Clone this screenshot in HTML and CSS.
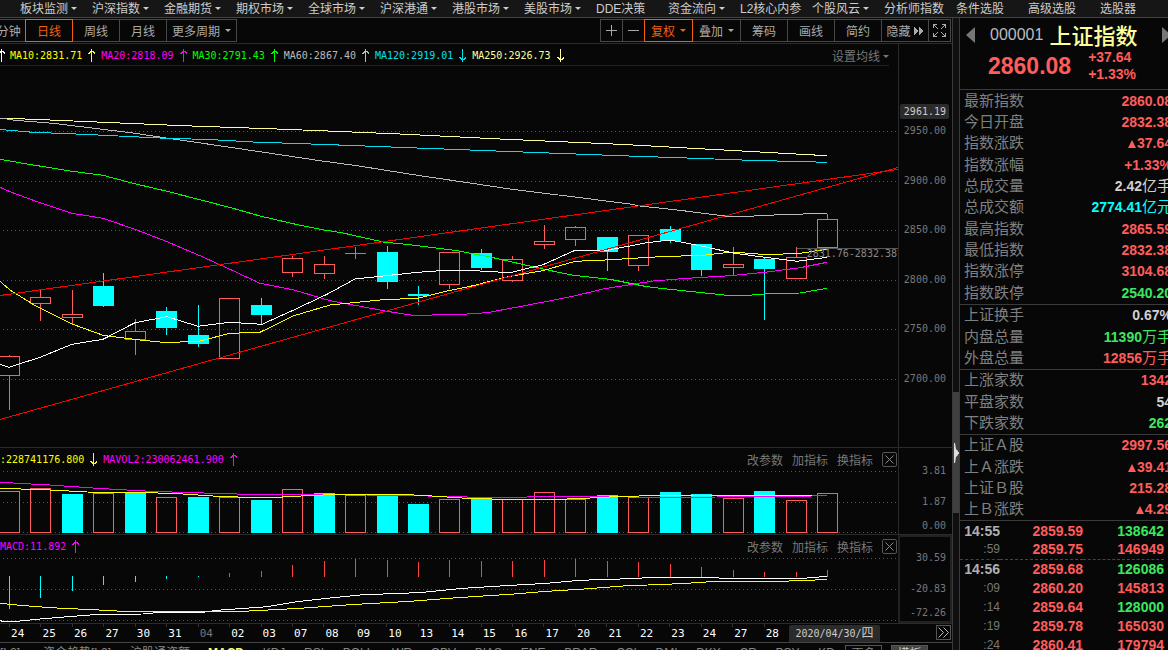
FILE: index.html
```html
<!DOCTYPE html>
<html lang="zh-CN">
<head>
<meta charset="utf-8">
<title>上证指数 000001</title>
<link rel="stylesheet" href="styles.css">
</head>
<body>
<div class="app">
  <nav class="nav">
    <button class="nav-item caret">板块监测</button>
    <button class="nav-item caret">沪深指数</button>
    <button class="nav-item caret">金融期货</button>
    <button class="nav-item caret">期权市场</button>
    <button class="nav-item caret">全球市场</button>
    <button class="nav-item caret">沪深港通</button>
    <button class="nav-item caret">港股市场</button>
    <button class="nav-item caret">美股市场</button>
    <button class="nav-item">DDE决策</button>
    <button class="nav-item caret">资金流向</button>
    <button class="nav-item">L2核心内参</button>
    <button class="nav-item caret">个股风云</button>
    <button class="nav-item">分析师指数</button>
    <button class="nav-item">条件选股</button>
    <button class="nav-item">高级选股</button>
    <button class="nav-item">选股器</button>
  </nav>

  <div class="body">
    <main class="work">
      <div class="toolbar">
        <div class="group periods">
          <button class="tool">60分钟</button>
          <button class="tool active">日线</button>
          <button class="tool">周线</button>
          <button class="tool">月线</button>
          <button class="tool wide caret">更多周期</button>
        </div>
        <div class="group">
          <button class="tool icon" aria-label="放大"><svg width="11" height="11"><path d="M5.5 0V11M0 5.5H11"/></svg></button>
          <button class="tool icon" aria-label="缩小"><svg width="11" height="11"><path d="M0 5.5H11"/></svg></button>
          <button class="tool menu active caret">复权</button>
          <button class="tool menu caret">叠加</button>
          <button class="tool">筹码</button>
          <button class="tool">画线</button>
          <button class="tool">简约</button>
          <button class="tool hide">隐藏<svg width="10" height="8"><path class="solid" d="M0 0L5 4L0 8ZM5 0L10 4L5 8Z"/></svg></button>
          <button class="tool icon" aria-label="全屏"><svg width="13" height="13"><path d="M.5 4V.5H4M9 .5H12.5V4M12.5 9V12.5H9M4 12.5H.5V9M1 1L5 5M12 1L8 5M12 12L8 8M1 12L5 8"/></svg></button>
        </div>
      </div>

      <section class="panel price">
        <div class="plot">
          <header class="head ma">
            <div class="legend">
              <svg class="arrow white lead"><use href="#up"/></svg>
              <span class="yellow">MA10:2831.71</span><svg class="arrow yellow"><use href="#up"/></svg>
              <span class="magenta">MA20:2818.09</span><svg class="arrow magenta"><use href="#up"/></svg>
              <span class="lime">MA30:2791.43</span><svg class="arrow lime"><use href="#up"/></svg>
              <span class="silver">MA60:2867.40</span><svg class="arrow silver"><use href="#up"/></svg>
              <span class="aqua">MA120:2919.01</span><svg class="arrow aqua"><use href="#down"/></svg>
              <span class="cream">MA250:2926.73</span><svg class="arrow cream"><use href="#down"/></svg>
            </div>
            <button class="set caret">设置均线</button>
          </header>
          <svg class="chart" id="price" viewBox="0 66 898 381" preserveAspectRatio="none" role="img" aria-label="日K线"></svg>
          <span class="gap-note">2831.76-2832.38</span>
        </div>
        <div class="axis">
          <span class="badge">2961.19</span>
          <div class="scale">
            <span>2950.00</span><span>2900.00</span><span>2850.00</span><span>2800.00</span><span>2750.00</span><span>2700.00</span>
          </div>
        </div>
      </section>

      <section class="panel volume">
        <div class="plot">
          <header class="head">
            <div class="legend">
              <span class="yellow">:228741176.800</span><svg class="arrow yellow"><use href="#down"/></svg>
              <span class="magenta">MAVOL2:230062461.900</span><svg class="arrow magenta"><use href="#up"/></svg>
            </div>
            <div class="actions">
              <button>改参数</button><button>加指标</button><button>换指标</button>
              <button class="close" aria-label="关闭"><svg width="9" height="9"><path d="M.5 .5L8.5 8.5M8.5 .5L.5 8.5"/></svg></button>
            </div>
          </header>
          <svg class="chart" id="volume" viewBox="0 470 898 64" preserveAspectRatio="none" role="img" aria-label="成交量"></svg>
        </div>
        <div class="axis"><div class="sub"><span>3.81</span><span>1.87</span><span>0.00</span></div></div>
      </section>

      <section class="panel macd">
        <div class="plot">
          <header class="head">
            <div class="legend">
              <span class="magenta">MACD:11.892</span><svg class="arrow magenta"><use href="#up"/></svg>
            </div>
            <div class="actions">
              <button>改参数</button><button>加指标</button><button>换指标</button>
              <button class="close" aria-label="关闭"><svg width="9" height="9"><path d="M.5 .5L8.5 8.5M8.5 .5L.5 8.5"/></svg></button>
            </div>
          </header>
          <svg class="chart" id="macd" viewBox="0 557 898 66" preserveAspectRatio="none" role="img" aria-label="MACD"></svg>
        </div>
        <div class="axis selected"><div class="sub"><span>30.59</span><span>-20.83</span><span>-72.26</span></div></div>
      </section>

      <div class="dates">
        <div class="days">
          <span>24</span><span>25</span><span>26</span><span>27</span><span>30</span><span>31</span><span class="month">04</span><span>02</span><span>03</span><span>07</span><span>08</span><span>09</span><span>10</span><span>13</span><span>14</span><span>15</span><span>16</span><span>17</span><span>20</span><span>21</span><span>22</span><span>23</span><span>24</span><span>27</span><span>28</span>
        </div>
        <span class="today">2020/04/30/<span class="weekday">四</span></span>
        <button class="more" aria-label="更多"><svg width="11" height="11"><path d="M.5 .5L5.5 5.5L.5 10.5M5.5 .5L10.5 5.5L5.5 10.5"/></svg></button>
      </div>

      <div class="tabs">
        <button class="cut">分时量[L2]</button>
        <button>资金趋势[L2]</button>
        <button>沪股通资额</button>
        <div class="indicators">
          <button class="on">MACD</button><button>KDJ</button><button>RSI</button><button>BOLL</button><button>WR</button><button>OBV</button><button>BIAS</button><button>ENE</button><button>BRAR</button><button>CCI</button><button>DMI</button><button>DKX</button><button>CR</button><button>PSY</button><button>KD</button>
        </div>
        <button class="boxed">更多</button>
        <button class="boxed filled">模板</button>
      </div>
    </main>

    <div class="splitter"><div class="thumb"><svg width="5" height="20"><path d="M0 0H1L2 6L4 8V9H5V11H4V12L2 14L1 20H0Z"/></svg></div></div>

    <aside class="quote">
      <header class="title">
        <button class="prev" aria-label="上一个"><svg width="9" height="16"><path d="M9 0V16L0 8Z"/></svg></button>
        <div class="name"><span class="code">000001</span><h1>上证指数</h1></div>
        <button class="next" aria-label="下一个"><svg width="9" height="16"><path d="M0 0V16L9 8Z"/></svg></button>
        <div class="last"><strong>2860.08</strong><div class="change"><span>+37.64</span><span>+1.33%</span></div></div>
      </header>

      <div class="facts">
        <dl class="ten">
          <div><dt>最新指数</dt><dd>2860.08</dd></div>
          <div><dt>今日开盘</dt><dd>2832.38</dd></div>
          <div><dt>指数涨跌</dt><dd class="delta">37.64</dd></div>
          <div><dt>指数涨幅</dt><dd>+1.33%</dd></div>
          <div><dt>总成交量</dt><dd class="flat">2.42<span>亿手</span></dd></div>
          <div><dt>总成交额</dt><dd class="money">2774.41<span>亿元</span></dd></div>
          <div><dt>最高指数</dt><dd>2865.59</dd></div>
          <div><dt>最低指数</dt><dd>2832.38</dd></div>
          <div><dt>指数涨停</dt><dd>3104.68</dd></div>
          <div><dt>指数跌停</dt><dd class="down">2540.20</dd></div>
        </dl>
        <dl class="three">
          <div><dt>上证换手</dt><dd class="flat">0.67%</dd></div>
          <div><dt>内盘总量</dt><dd class="down">11390<span>万手</span></dd></div>
          <div><dt>外盘总量</dt><dd>12856<span>万手</span></dd></div>
        </dl>
        <dl class="three">
          <div><dt>上涨家数</dt><dd>1342</dd></div>
          <div><dt>平盘家数</dt><dd class="flat">54</dd></div>
          <div><dt>下跌家数</dt><dd class="down">262</dd></div>
        </dl>
        <dl class="four">
          <div><dt>上证Ａ股</dt><dd>2997.56</dd></div>
          <div><dt>上Ａ涨跌</dt><dd class="delta">39.41</dd></div>
          <div><dt>上证Ｂ股</dt><dd>215.28</dd></div>
          <div><dt>上Ｂ涨跌</dt><dd class="delta">4.29</dd></div>
        </dl>
      </div>

      <table class="ticks">
        <tbody>
          <tr class="minute"><th>14:55</th><td>2859.59</td><td class="down">138642</td></tr>
          <tr><th>:59</th><td>2859.75</td><td>146949</td></tr>
          <tr class="minute split"><th>14:56</th><td>2859.68</td><td class="down">126086</td></tr>
          <tr><th>:09</th><td>2860.20</td><td>145813</td></tr>
          <tr><th>:14</th><td>2859.64</td><td class="down">128000</td></tr>
          <tr><th>:19</th><td>2859.78</td><td>165030</td></tr>
          <tr><th>:24</th><td>2860.41</td><td>179794</td></tr>
        </tbody>
      </table>
    </aside>
  </div>
</div>

<svg class="defs" aria-hidden="true">
  <symbol id="up" viewBox="0 0 7 13"><path d="M3.5 0V13M0 4.5H1V3.5H2V2.5H5V3.5H6V4.5H7"/></symbol>
  <symbol id="down" viewBox="0 0 7 13"><path d="M3.5 0V13M0 8.5H1V9.5H2V10.5H5V9.5H6V8.5H7"/></symbol>
</svg>
<script src="chart.js"></script>
</body>
</html>
```
FILE: styles.css
```css
* { box-sizing: border-box; }

body {
  margin: 0;
  background: #070707;
  color: #aaa;
  font: 12px "Liberation Sans", "Noto Sans CJK SC", sans-serif;
}

button {
  margin: 0;
  padding: 0;
  border: 0;
  background: none;
  color: inherit;
  font: inherit;
  white-space: nowrap;
}

h1, dl, dd, dt { margin: 0; }
.defs { position: absolute; width: 0; height: 0; }

.app { display: flex; flex-direction: column; height: 100vh; overflow: hidden; }

.caret::after {
  content: "";
  display: inline-block;
  margin-left: 3px;
  vertical-align: 3px;
  border: 3px solid transparent;
  border-top-color: currentColor;
  border-bottom: 0;
}

/* top menu */
.nav {
  display: flex;
  flex: none;
  height: 18px;
  padding-left: 20px;
  overflow: hidden;
  background: #161616;
  border-bottom: 1px solid #444;
  color: #ccc;
}
.nav-item { flex: 0 0 72px; text-align: left; line-height: 16px; }

.body { display: flex; flex: 1; min-height: 0; }
.work { display: flex; flex: 1; flex-direction: column; min-width: 0; overflow: hidden; }
.work > * { flex: none; }

/* toolbar */
.toolbar {
  display: flex;
  justify-content: space-between;
  height: 26px;
  padding: 1px 1px 0 0;
  border-bottom: 1px solid #2a2a2a;
}
.group { display: flex; }
.periods { margin-left: -22px; }
.tool {
  display: flex;
  align-items: center;
  justify-content: center;
  width: 48px;
  height: 23px;
  border: 1px solid #484848;
}
.tool + .tool { margin-left: -1px; }
.tool.icon { width: 23px; }
.tool.menu { width: 49px; }
.tool.wide { width: 71px; }
.tool.caret::after { margin-left: 5px; }
.tool.active { position: relative; border-color: #f06010; color: #f06010; }
.tool svg { fill: none; stroke: #aaa; shape-rendering: crispEdges; }
.tool.hide svg { margin-left: 3px; }
.tool .solid { fill: #aaa; stroke: none; }

/* chart panels */
.panel { display: flex; }
.plot { position: relative; display: flex; flex: 1; flex-direction: column; min-width: 0; }
.price { height: 404px; border-bottom: 1px solid #2a2a2a; }
.volume { height: 87px; border-bottom: 1px solid #2a2a2a; }
.macd { height: 88px; }
.chart { display: block; flex: 1; width: 100%; min-height: 0; shape-rendering: crispEdges; }
.chart polyline, .chart line, .chart .hollow { fill: none; stroke-width: 1; }

.head {
  display: flex;
  flex: none;
  align-items: center;
  justify-content: space-between;
  height: 22px;
  color: #777;
}
.head.ma { margin-right: 9px; padding-top: 1px; border-bottom: 1px solid #222; }
.legend {
  display: flex;
  align-items: center;
  font: 10px "DejaVu Sans Mono", monospace;
  white-space: nowrap;
}
.arrow {
  width: 7px;
  height: 13px;
  margin: 0 6px;
  fill: none;
  stroke: currentColor;
  shape-rendering: crispEdges;
}
.arrow.lead { margin-left: -2px; margin-right: 5px; }
.actions { display: flex; align-items: center; gap: 9px; padding-right: 1px; }
.close {
  display: flex;
  align-items: center;
  justify-content: center;
  width: 15px;
  height: 15px;
  border: 1px solid #555;
  border-radius: 2px;
}
.close svg { stroke: #888; }
.gap-note {
  position: absolute;
  right: 1px;
  top: 204px;
  color: #888;
  font: 10px "DejaVu Sans Mono", monospace;
}

.white { color: #fff; }
.yellow { color: #ff0; }
.magenta { color: #f0f; }
.lime { color: #0f0; }
.silver { color: #bbb; }
.aqua { color: #00e0f0; }
.cream { color: #ffff99; }

.axis {
  flex: 0 0 54px;
  padding-right: 6px;
  border-left: 1px solid #2a2a2a;
  color: #777;
  font: 10px/14px "DejaVu Sans Mono", monospace;
  text-align: right;
}
.axis.selected { border: 2px solid #222; padding-right: 4px; }
.badge {
  display: block;
  height: 15px;
  margin: 60px -3px 5px 1px;
  padding-right: 3px;
  border-radius: 2px;
  background: #2b2b2b;
  color: #ccc;
  line-height: 16px;
}
.scale { display: flex; flex-direction: column; justify-content: space-between; height: 262px; }
.sub { display: flex; flex-direction: column; padding-top: 16px; }
.selected .sub { padding-top: 14px; }
.sub span + span { margin-top: 17px; }
.sub span + span + span { margin-top: 10px; }

/* date row */
.dates {
  display: flex;
  height: 20px;
  padding: 0 1px 0 2px;
  border-top: 1px solid #2a2a2a;
  border-bottom: 1px solid #444;
}
.days {
  display: grid;
  flex: 1;
  grid-template-columns: repeat(25, 1fr);
  color: #fff;
  font: 11px/19px "DejaVu Sans Mono", monospace;
  text-align: center;
}
.days span { position: relative; }
.days span::before {
  content: "";
  position: absolute;
  left: 7px;
  top: 0;
  width: 1px;
  height: 3px;
  background: #333;
}
.days .month { color: #777; }
.today {
  width: 91px;
  margin: 1px 56px 0 1px;
  border-radius: 2px 2px 0 0;
  background: #2b2b2b;
  color: #ccc;
  font: 10px/17px "DejaVu Sans Mono", monospace;
  text-align: center;
}
.weekday { font-family: "Noto Sans CJK SC", sans-serif; font-size: 12px; line-height: 12px; }
.more {
  display: flex;
  align-items: center;
  justify-content: center;
  width: 15px;
  height: 15px;
  margin-top: 1px;
  border: 1px solid #555;
}
.more svg { fill: none; stroke: #bbb; }

/* indicator tabs */
.tabs { display: flex; height: 20px; color: #888; line-height: 18px; }
.tabs > button { width: 64px; text-align: left; }
.tabs > .cut { width: 62px; margin-left: -36px; margin-right: 17px; }
.tabs > .cut + button { width: 70px; margin-right: 17px; }
.indicators {
  display: flex;
  flex: 1;
  justify-content: space-between;
  margin: 0 10px 0 14px;
}
.indicators .on { color: #ffff66; font-weight: bold; }
.tabs > .boxed { width: 37px; margin: 2px 9px 0 0; border: 1px solid #555; text-align: center; line-height: 14px; }
.tabs > .filled { margin-right: 24px; background: #444; color: #ccc; }

/* splitter */
.splitter { flex: 0 0 8px; padding-top: 374px; background: #101010; border: solid #3a3a3a; border-width: 0 1px; }
.thumb { display: flex; align-items: center; height: 121px; padding-left: 1px; background: #404040; }
.thumb svg { fill: #ddd; }

/* quote panel */
.quote { flex: 0 0 208px; overflow: hidden; }
.title {
  display: grid;
  grid-template-columns: 30px 1fr 6px;
  grid-template-rows: 34px 28px;
  align-items: center;
  height: 72px;
  border-bottom: 1px solid #3a3a3a;
}
.title svg { display: block; fill: #777; }
.prev { padding-left: 6px; }
.name { display: flex; align-items: center; gap: 6px; white-space: nowrap; }
.code { color: #b8bcc4; font-size: 16px; }
.name h1 { padding-bottom: 3px; color: #ffff99; font: 500 22px/30px "Noto Sans CJK SC", sans-serif; }
.last { display: flex; grid-column: 1 / -1; align-items: center; gap: 17px; padding-left: 28px; color: #ff5c5c; }
.last strong { font-size: 23px; line-height: 28px; }
.change { display: flex; flex-direction: column; font: bold 14px/17px "Liberation Sans", sans-serif; }

.facts { display: flex; flex-direction: column; height: 431px; margin-right: -4px; }
.facts dl { display: grid; grid-auto-rows: 1fr; padding-left: 4px; border-bottom: 1px solid #3a3a3a; }
.ten { flex: 10 1 0; }
.three { flex: 3 1 0; }
.four { flex: 4 1 0; }
.facts dl > div { display: flex; align-items: center; justify-content: space-between; min-height: 0; line-height: 20px; }
dt { color: #808080; font-size: 15px; }
dd { color: #ff5c5c; font-size: 14px; font-weight: bold; white-space: nowrap; }
dd span { font-size: 15px; font-weight: normal; }
.delta::before {
  content: "";
  display: inline-block;
  margin-right: 1px;
  border: 4px solid transparent;
  border-top: 0;
  border-bottom: 8px solid currentColor;
}
.flat { color: #d0d0d0; }
.money { color: #0ff; }

.ticks { width: 204px; border-collapse: collapse; table-layout: fixed; color: #ff5c5c; font-size: 14px; font-weight: bold; }
.ticks tr { height: 19px; }
.ticks th, .ticks td { padding: 0; text-align: right; line-height: 18px; }
.ticks th { width: 40px; color: #777; font-size: 12px; font-weight: normal; }
.ticks .minute th { color: #b0b0b0; font-size: 14px; font-weight: bold; }
.ticks td:nth-child(2) { width: 83px; }
.ticks .split { border-top: 1px dashed #444; }
dd.down, td.down { color: #3ce660; }
```
FILE: chart.js
```js
const NS = "http://www.w3.org/2000/svg";
const UP = "#ff5c5c";
const DOWN = "#00ffff";

// Each session: x, rising, high, body top, body bottom, low, volume top, MACD end, volume rising (if it differs)
const sessions = [
  [9, 1, 355, 356, 375, 410, 491, 609], [40, 1, 290, 297, 303, 321, 488, 598],
  [72, 1, 290, 314, 317, 325, 494, 591, 0], [103, 0, 273, 286, 306, 307, 493, 585, 1],
  [135, 1, 319, 331, 339, 355, 492, 582, 0], [166, 0, 307, 311, 328, 335, 497, 579, 1],
  [198, 0, 305, 335, 344, 347, 497, 577], [229, 1, 298, 298, 358, 358, 497, 573],
  [261, 0, 298, 305, 315, 324, 500, 571], [292, 1, 256, 258, 272, 277, 489, 565],
  [324, 1, 256, 264, 273, 279, 493, 561, 0], [355, 1, 247, 253, 253, 259, 495, 559],
  [387, 0, 246, 252, 282, 289, 496, 560], [418, 0, 286, 294, 296, 305, 504, 562],
  [449, 1, 252, 252, 284, 289, 499, 560], [481, 0, 249, 253, 268, 270, 499, 561],
  [512, 1, 256, 259, 280, 282, 499, 561], [544, 1, 225, 241, 244, 249, 492, 560],
  [575, 1, 226, 227, 239, 246, 499, 559], [607, 0, 237, 237, 252, 271, 495, 561],
  [638, 1, 235, 235, 265, 271, 497, 562], [670, 0, 226, 229, 241, 243, 492, 564],
  [701, 0, 244, 244, 270, 276, 494, 567], [733, 1, 247, 264, 267, 275, 498, 570],
  [764, 0, 257, 259, 269, 320, 491, 572], [796, 1, 247, 257, 278, 278, 500, 572],
  [827, 1, 214, 219, 247, 247, 493, 570]
];

function add(id, tag, attrs) {
  const el = document.createElementNS(NS, tag);
  for (const key in attrs) el.setAttribute(key, attrs[key]);
  document.getElementById(id).appendChild(el);
}

function line(id, x1, y1, x2, y2, stroke, dash) {
  add(id, "line", { x1, y1, x2, y2, stroke, "stroke-dasharray": dash || "none" });
}

function curve(id, stroke, points) {
  add(id, "polyline", { points, stroke });
}

function bar(id, x, top, bottom, up) {
  if (up) {
    add(id, "rect", { class: "hollow", x: x - 9.5, y: top + 0.5, width: 20, height: bottom - top, stroke: UP });
  } else {
    add(id, "rect", { x: x - 10, y: top, width: 21, height: bottom - top, fill: DOWN });
  }
}

const grid = {
  price: [131.5, 181.5, 230.5, 280.5, 329.5, 379.5],
  volume: [471.5, 502.5, 532.5],
  macd: [558.5, 589.5, 620.5]
};
for (const id in grid) {
  for (const y of grid[id]) line(id, 3, y, 898, y, "#555", "1 3");
}

for (const [x, up, high, top, bottom, low, vol, macd, volUp = up] of sessions) {
  const c = x + 0.5;
  const color = up ? UP : DOWN;
  if (high < top) line("price", c, high, c, top, color);
  if (low > bottom) line("price", c, bottom, c, low, color);
  if (top === bottom) line("price", x - 10, top + 0.5, x + 11, top + 0.5, color);
  else bar("price", x, top, bottom, up);
  bar("volume", x, vol, volUp ? 532 : 533, volUp);
  line("macd", c, macd > 576 ? 576 : 577, c, macd, macd > 576 ? DOWN : "#ff4040");
}

line("price", 797, 248.5, 898, 248.5, "#555");
curve("price", "#ffff99", "0,118 50,120 183,125.7 277,129 320,130.7 400,134 500,139 620,144.3 827,155.7");
curve("price", "#bbb", "0,118 15,120.3 53,123.3 133,133 173,139 233,147.7 320,160.7 357,165.7 420,175.7 470,183 510,189 577,197.3 630,204 640,206 680,210.3 727,216.3 748,216.3 780,214.7 827,213.3");
curve("price", "#00e0f0", "0,129.5 33,132.3 83,134.3 160,138 213,139.7 253,142 320,144.3 620,155.7 687,158 750,160.3 827,162.3");
curve("price", "#0f0", "0,159.3 23,163.3 70,171 103,175.3 133,183.3 167,191.3 200,199.7 233,208.3 260,216 293,223.7 320,229.3 343,233 383,242 410,244.7 457,250.7 490,257 543,269 573,275.3 610,279.3 647,286.7 667,289 727,295.3 748,295.3 773,293.3 800,293 827,288.3");
curve("price", "#f0f", "0,187.3 10,191.7 37,201.7 72,213.3 103,218.3 137,230 167,241.7 200,255.7 230,269.3 260,283.3 293,289.7 330,300.7 387,311.3 417,316 443,314.3 463,314.3 487,312.7 523,306 573,296.3 603,289 653,281 687,278.3 730,275.7 767,272 800,267.7 827,262.3");
curve("price", "#ff0", "0,281.3 10,290 37,306.7 72,324 103,335.3 137,339.7 167,342.7 200,341 230,333.3 260,332.3 293,316 330,305 383,299.7 418,298.3 447,291 473,285.7 510,276.3 543,270.7 575,261.3 600,260.3 660,256.7 703,255.3 732,252 767,254.7 800,253.3 827,249.3");
curve("price", "#fff", "0,364.3 9,367.3 40,357.3 72,344.3 103,339.3 135,322.7 167,316.7 198,326.3 230,322.3 262,324.3 293,310.3 327,294.3 355,279 418,272.3 450,270 480,271 510,272.7 543,264.7 575,250.3 607,250.3 647,242.7 670,240 700,245.7 733,253 765,257.3 797,261.3 827,257.3");
line("price", 0, 295.5, 898, 169.5, "#f00");
line("price", 0, 419.5, 898, 167.5, "#f00");

curve("volume", "#f0f", "0,482.3 25,483.7 50,485 97,488.3 150,491.3 213,493.3 247,494.3 333,494.7 400,495.3 467,497 527,497 590,496.7 680,497.3 717,497 812,496 827,495.3");
curve("volume", "#ff0", "0,488.3 50,490 87,492 150,492.7 183,494 217,496.3 247,497.3 277,497.3 307,495.7 340,494.3 400,494.3 427,495.7 467,498.3 503,499.3 560,499.3 590,498 623,496.3 655,495.7 812,495.5");
curve("macd", "#fff", "0,620.3 3,621.7 13,621.7 43,618.7 77,616 100,614.3 143,614 160,612.3 203,612.3 217,610.3 267,606.7 297,601.7 333,597.7 363,594.7 403,593.3 423,592.3 463,588.3 500,586 547,583.3 580,580.3 620,579 657,577.3 717,577.3 720,578.3 803,578.3 827,576.3");
curve("macd", "#ff0", "0,603.3 17,605 50,607.7 93,609.7 123,611.3 243,611.3 300,608.3 350,604.7 410,601.3 457,597.7 510,594.3 547,591.3 580,589.3 623,586 680,583.7 717,581.3 780,581.3 810,580.3 827,579.3");
```
